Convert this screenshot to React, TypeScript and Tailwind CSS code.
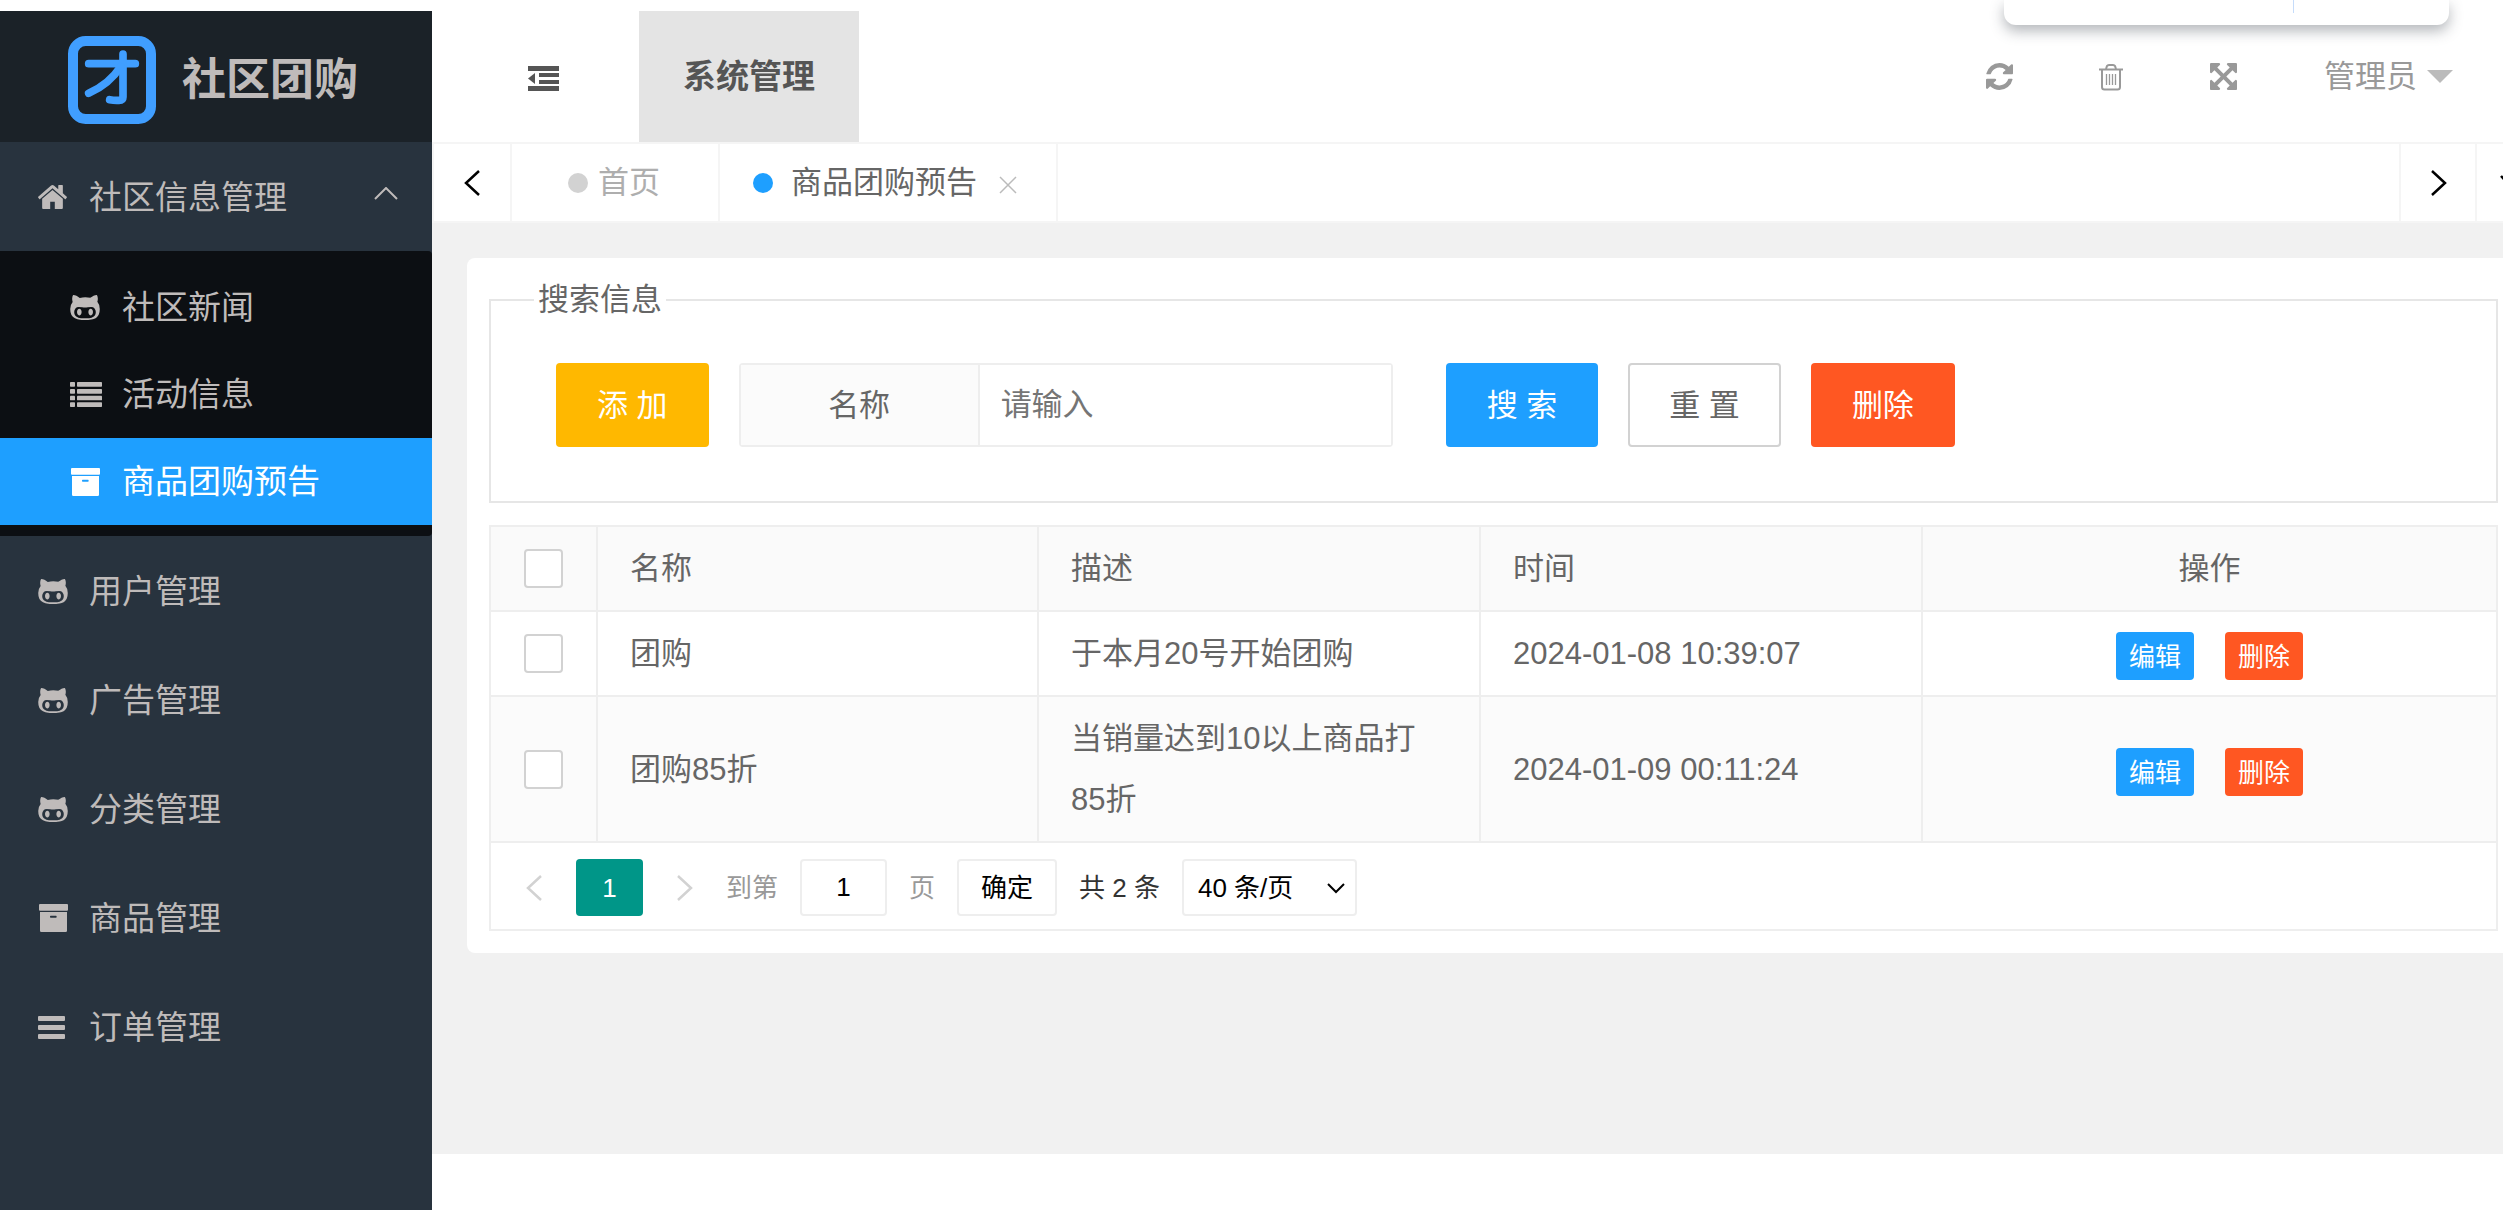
import { useState, type ReactNode } from "react";

/* ---------- Icons ---------- */

function LogoMark() {
  return (
    <svg className="size-[88px] shrink-0" viewBox="0 0 264 264" fill="none" stroke="#409eff" aria-hidden="true">
      <rect x="15" y="15" width="234" height="234" rx="38" strokeWidth="30" />
      <g strokeWidth="23" strokeLinecap="round" strokeLinejoin="round">
        <path d="M62 83H202" />
        <path d="M165 54V183Q165 193 153 193Q140 194 125 191" />
        <path d="M158 92C134 129 107 152 62 172" />
      </g>
    </svg>
  );
}

function HomeIcon() {
  return (
    <svg className="h-6 w-[29px]" viewBox="89 250 1614 1286" preserveAspectRatio="none" fill="currentColor" aria-hidden="true">
      <path d="M1472 992v480q0 26-19 45t-45 19h-384v-384h-256v384h-384q-26 0-45-19t-19-45v-480q0-1 .5-3t.5-3l575-474 575 474q1 2 1 6zm223-69l-62 74q-8 9-21 11h-3q-13 0-21-7l-692-577-692 577q-12 8-24 7-13-2-21-11l-62-74q-8-10-7-23.5t11-21.5l719-599q32-26 76-26t76 26l244 204v-195q0-14 9-23t23-9h192q14 0 23 9t9 23v408l219 182q10 8 11 21.5t-7 23.5z" />
    </svg>
  );
}

function CatIcon() {
  return (
    <svg className="h-[25px] w-[30px]" viewBox="0 256 1664 1408" fill="currentColor" aria-hidden="true">
      <path d="M640 1216q0 40-12.5 82t-43 76-72.5 34-72.5-34-43-76-12.5-82 12.5-82 43-76 72.5-34 72.5 34 43 76 12.5 82zm640 0q0 40-12.5 82t-43 76-72.5 34-72.5-34-43-76-12.5-82 12.5-82 43-76 72.5-34 72.5 34 43 76 12.5 82zm160 0q0-120-69-204t-187-84q-41 0-195 21-71 11-157 11t-157-11q-152-21-195-21-118 0-187 84t-69 204q0 88 32 153.5t81 103 122 60 140 29.5 149 7h168q82 0 149-7t140-29.5 122-60 81-103 32-153.5zm224-176q0 207-61 331-38 77-105.5 133t-141 86-170 47.5-171.5 22-167 4.5q-78 0-142-3t-147.5-12.5-152.5-30-137-51.5-121-81-86-115q-62-123-62-331 0-237 136-396-27-82-27-170 0-116 51-218 108 0 190 39.5t189 123.5q147-35 309-35 148 0 280 32 105-82 187-121t189-39q51 102 51 218 0 87-27 168 136 160 136 398z" />
    </svg>
  );
}

function ListIcon() {
  return (
    <svg className="h-[25px] w-8" viewBox="0 0 96 75" fill="currentColor" aria-hidden="true">
      {[0, 21, 41, 61].map((y) => (
        <g key={y}>
          <rect x="0" y={y} width="15" height="14" rx="2" />
          <rect x="21" y={y} width="75" height="14" rx="2" />
        </g>
      ))}
    </svg>
  );
}

function ArchiveIcon() {
  return (
    <svg className="ml-px h-7 w-[29px]" viewBox="0 0 87 84" fill="currentColor" aria-hidden="true">
      <rect x="0" y="0" width="87" height="20" rx="3" />
      <path
        fillRule="evenodd"
        d="M3 24H84V80Q84 84 80 84H7Q3 84 3 80ZM35 35Q33 35 33 38T35 41H51Q53 41 53 38T51 35Z"
      />
    </svg>
  );
}

function BarsIcon() {
  return (
    <svg className="h-[23px] w-[27px]" viewBox="0 0 27 23" fill="currentColor" aria-hidden="true">
      <rect x="0" y="0" width="27" height="5" rx="1" />
      <rect x="0" y="9" width="27" height="5" rx="1" />
      <rect x="0" y="18" width="27" height="5" rx="1" />
    </svg>
  );
}

function OutdentIcon() {
  return (
    <svg className="h-[25px] w-[31px]" viewBox="0 0 31 25" fill="currentColor" aria-hidden="true">
      <rect x="0" y="0" width="31" height="5" />
      <rect x="11" y="7" width="20" height="4" />
      <rect x="11" y="14" width="20" height="4" />
      <rect x="0" y="20" width="31" height="5" />
      <path d="M7 7V18L0 12.5Z" />
    </svg>
  );
}

function RefreshIcon() {
  return (
    <svg className="h-[27px] w-[27px]" viewBox="128 128 1536 1536" fill="currentColor" aria-hidden="true">
      <path d="M1639 1056q0 5-1 7-64 268-268 434.5t-478 166.5q-146 0-282.5-55t-243.5-157l-129 129q-19 19-45 19t-45-19-19-45v-448q0-26 19-45t45-19h448q26 0 45 19t19 45-19 45l-137 137q71 66 161 102t187 36q134 0 250-65t186-179q11-17 53-117 8-23 30-23h192q13 0 22.5 9.5t9.5 22.5zm25-800v448q0 26-19 45t-45 19h-448q-26 0-45-19t-19-45 19-45l138-138q-148-137-349-137-134 0-250 65t-186 179q-11 17-53 117-8 23-30 23h-199q-13 0-22.5-9.5t-9.5-22.5v-7q65-268 270-434.5t480-166.5q146 0 284 55.5t245 156.5l130-129q19-19 45-19t45 19 19 45z" />
    </svg>
  );
}

function TrashIcon() {
  return (
    <svg className="h-7 w-6" viewBox="0 0 24 28" fill="none" stroke="currentColor" aria-hidden="true">
      <path d="M0 6.500H24" strokeWidth="2" />
      <path d="M7 6L8 3Q8.500 2 10 2H14Q15.500 2 16 3L17 6" strokeWidth="2" />
      <path d="M3 6V24Q3 26.500 5.500 26.500H18.500Q21 26.500 21 24V6" strokeWidth="2" />
      <path d="M7.500 11V22M10.500 11V22M13.500 11V22M16.500 11V22" strokeWidth="1.300" />
    </svg>
  );
}

function ExpandIcon() {
  return (
    <svg className="h-[27px] w-[27px]" viewBox="128 128 1536 1536" fill="currentColor" aria-hidden="true">
      <path d="M1411 541l-355 355 355 355 144-144q29-31 70-14 39 17 39 59v448q0 26-19 45t-45 19h-448q-42 0-59-40-17-39 14-69l144-144-355-355-355 355 144 144q31 30 14 69-17 40-59 40h-448q-26 0-45-19t-19-45v-448q0-42 40-59 39-17 69 14l144 144 355-355-355-355-144 144q-19 19-45 19-12 0-24-5-40-17-40-59v-448q0-26 19-45t45-19h448q42 0 59 40 17 39-14 69l-144 144 355 355 355-355-144-144q-31-30-14-69 17-40 59-40h448q26 0 45 19t19 45v448q0 42-39 59-13 5-25 5-26 0-45-19z" />
    </svg>
  );
}

function ChevronLeft() {
  return (
    <svg className="h-[26px] w-4" viewBox="0 0 16 26" fill="none" stroke="currentColor" strokeWidth="2.5" aria-hidden="true">
      <path d="M15 1L2 13L15 25" />
    </svg>
  );
}

function ChevronRight() {
  return (
    <svg className="h-[26px] w-4" viewBox="0 0 16 26" fill="none" stroke="currentColor" strokeWidth="2.5" aria-hidden="true">
      <path d="M1 1L14 13L1 25" />
    </svg>
  );
}

function ChevronDown() {
  return (
    <svg className="h-4 w-[26px] shrink-0" viewBox="0 0 26 16" fill="none" stroke="currentColor" strokeWidth="2.5" aria-hidden="true">
      <path d="M1 1L13 14L25 1" />
    </svg>
  );
}

/* ---------- Sidebar ---------- */

const communityItems = [
  { label: "社区新闻", icon: <CatIcon />, active: false },
  { label: "活动信息", icon: <ListIcon />, active: false },
  { label: "商品团购预告", icon: <ArchiveIcon />, active: true },
];

const sections = [
  { label: "用户管理", icon: <CatIcon /> },
  { label: "广告管理", icon: <CatIcon /> },
  { label: "分类管理", icon: <CatIcon /> },
  { label: "商品管理", icon: <ArchiveIcon /> },
  { label: "订单管理", icon: <BarsIcon /> },
];

function SectionLink({ label, icon, children }: { label: string; icon: ReactNode; children?: ReactNode }) {
  return (
    <a href="#" className="flex h-[109px] items-center pl-[38px] pr-[34px] pt-px">
      <span className="mr-[19px] flex w-8 shrink-0 items-center">{icon}</span>
      <span className="flex-1">{label}</span>
      {children}
    </a>
  );
}

function Sidebar() {
  return (
    <aside className="w-[432px] shrink-0 bg-[#28333e] text-[33px] leading-none text-[#bfbbba]">
      <div className="flex h-[131px] items-center gap-[26px] bg-[#1b2228] pl-[68px] pt-[7px]">
        <LogoMark />
        <h1 className="text-[44px] font-bold">社区团购</h1>
      </div>
      <nav>
        <SectionLink label="社区信息管理" icon={<HomeIcon />}>
          <svg className="mb-2 h-[13px] w-6" viewBox="0 0 24 13" fill="none" stroke="currentColor" strokeWidth="2" aria-hidden="true">
            <path d="M1 12L12 1L23 12" />
          </svg>
        </SectionLink>
        <ul className="rounded-r bg-[#0c0f13] pb-[11px] pt-[13px]">
          {communityItems.map((item) => (
            <li key={item.label}>
              <a
                href="#"
                className={
                  item.active
                    ? "flex h-[87px] items-center bg-[#1e9fff] pl-[70px] text-white"
                    : "flex h-[87px] items-center pl-[70px]"
                }
              >
                <span className="mr-5 flex w-8 shrink-0 items-center">{item.icon}</span>
                {item.label}
              </a>
            </li>
          ))}
        </ul>
        {sections.map((s) => (
          <SectionLink key={s.label} label={s.label} icon={s.icon} />
        ))}
      </nav>
    </aside>
  );
}

/* ---------- Top bars ---------- */

function TopBar() {
  return (
    <header className="flex h-[131px] items-stretch justify-between bg-white">
      <div className="flex">
        <button type="button" aria-label="收起菜单" className="pl-24 pr-20 pt-[3px] text-[#555]">
          <OutdentIcon />
        </button>
        <button type="button" className="bg-[#e4e4e4] px-11 text-[33px] font-bold leading-none text-[#555]">
          系统管理
        </button>
      </div>
      <div className="flex items-center pr-[50px] text-[#999]">
        <button type="button" aria-label="刷新" className="flex w-28 justify-center">
          <RefreshIcon />
        </button>
        <button type="button" aria-label="清理" className="flex w-28 justify-center">
          <TrashIcon />
        </button>
        <button type="button" aria-label="全屏" className="flex w-28 justify-center">
          <ExpandIcon />
        </button>
        <button type="button" className="ml-[45px] flex items-center gap-[10px] text-[31px] leading-none">
          管理员
          <svg className="h-[13px] w-[26px] text-[#bbb]" viewBox="0 0 26 13" fill="currentColor" aria-hidden="true">
            <path d="M0 0H26L13 13Z" />
          </svg>
        </button>
      </div>
    </header>
  );
}

function TabBar() {
  return (
    <div className="flex h-[81px] items-stretch border-y-2 border-l-2 border-[#f5f5f5] bg-white text-[31px] leading-none">
      <button type="button" aria-label="向左" className="flex w-[78px] items-center justify-center border-r-2 border-[#f5f5f5] text-black">
        <ChevronLeft />
      </button>
      <button type="button" className="flex items-center border-r-2 border-[#f5f5f5] pl-14 pr-[58px] text-[#aeaeae]">
        <span className="mr-[10px] size-5 rounded-full bg-[#d2d2d2]" />
        首页
      </button>
      <div className="flex items-center border-r-2 border-[#f5f5f5] pl-[33px] pr-[39px] text-[#666]">
        <span className="mr-[18px] size-5 rounded-full bg-[#1e9fff]" />
        <button type="button">商品团购预告</button>
        <button type="button" aria-label="关闭标签" className="ml-[22px] mt-1 text-[#bbb]">
          <svg className="size-[18px]" viewBox="0 0 18 18" fill="none" stroke="currentColor" strokeWidth="1.5" aria-hidden="true">
            <path d="M1 1L17 17M17 1L1 17" />
          </svg>
        </button>
      </div>
      <div className="flex-1" />
      <button type="button" aria-label="向右" className="flex w-[76px] items-center justify-center border-l-2 border-[#f5f5f5] pl-[2px] text-black">
        <ChevronRight />
      </button>
      <button type="button" aria-label="更多" className="flex w-7 items-center overflow-hidden border-l-2 border-[#f5f5f5] pl-[23px] text-black">
        <ChevronDown />
      </button>
    </div>
  );
}

/* ---------- Content ---------- */

function SearchForm() {
  return (
    <form onSubmit={(e) => e.preventDefault()}>
      <fieldset className="border-2 border-[#e6e6e6] pb-[54px] pl-[65px] pt-[42px] leading-none">
        <legend className="-ml-[22px] px-1 leading-[42px]">搜索信息</legend>
        <div className="flex items-stretch">
          <button type="button" className="h-[84px] rounded bg-[#ffb800] px-[41px] text-white">
            添 加
          </button>
          <div className="ml-[30px] flex w-[654px] rounded border-2 border-[#eee]">
            <label htmlFor="name" className="flex w-[239px] shrink-0 items-center justify-center border-r-2 border-[#eee] bg-[#fbfbfb]">
              名称
            </label>
            <input
              id="name"
              type="text"
              placeholder="请输入"
              className="min-w-0 flex-1 bg-white px-[21px] outline-none placeholder:text-[#757575]"
            />
          </div>
          <button type="submit" className="ml-[53px] rounded bg-[#1e9fff] px-[41px] text-white">
            搜 索
          </button>
          <button type="reset" className="ml-[30px] rounded border-2 border-[#d2d2d2] bg-white px-[39px]">
            重 置
          </button>
          <button type="button" className="ml-[30px] rounded bg-[#ff5722] px-[41px] text-white">
            删除
          </button>
        </div>
      </fieldset>
    </form>
  );
}

const rows = [
  { name: "团购", desc: "于本月20号开始团购", time: "2024-01-08 10:39:07" },
  { name: "团购85折", desc: "当销量达到10以上商品打85折", time: "2024-01-09 00:11:24" },
];

function Check({ label }: { label: string }) {
  return (
    <input
      type="checkbox"
      aria-label={label}
      className="mx-auto block size-[39px] appearance-none rounded border-2 border-[#d2d2d2] bg-white checked:border-[#5fb878] checked:bg-[#5fb878]"
    />
  );
}

function DataTable() {
  return (
    <table className="w-full table-fixed border-separate border-spacing-0 text-left leading-[61px]">
      <colgroup>
        <col className="w-[107px]" />
        <col className="w-[441px]" />
        <col className="w-[442px]" />
        <col className="w-[442px]" />
        <col />
      </colgroup>
      <thead className="bg-[#fafafa]">
        <tr>
          <th className="border-b-2 border-r-2 border-[#eee] py-[11px]">
            <Check label="全选" />
          </th>
          <th className="border-b-2 border-r-2 border-[#eee] px-8 py-[11px] font-normal">名称</th>
          <th className="border-b-2 border-r-2 border-[#eee] px-8 py-[11px] font-normal">描述</th>
          <th className="border-b-2 border-r-2 border-[#eee] px-8 py-[11px] font-normal">时间</th>
          <th className="border-b-2 border-[#eee] px-8 py-[11px] text-center font-normal">操作</th>
        </tr>
      </thead>
      <tbody>
        {rows.map((row) => (
          <tr key={row.name} className="even:bg-[#fbfbfb]">
            <td className="border-b-2 border-r-2 border-[#eee] py-[11px]">
              <Check label={row.name} />
            </td>
            <td className="border-b-2 border-r-2 border-[#eee] px-8 py-[11px]">{row.name}</td>
            <td className="border-b-2 border-r-2 border-[#eee] px-8 py-[11px]">{row.desc}</td>
            <td className="border-b-2 border-r-2 border-[#eee] px-8 py-[11px]">{row.time}</td>
            <td className="border-b-2 border-[#eee] pt-[5px]">
              <div className="flex justify-center gap-[31px] text-[26px] leading-none text-white">
                <button type="button" className="h-12 rounded bg-[#1e9fff] px-[13px] pt-[2px]">
                  编辑
                </button>
                <button type="button" className="h-12 rounded bg-[#ff5722] px-[13px] pt-[2px]">
                  删除
                </button>
              </div>
            </td>
          </tr>
        ))}
      </tbody>
    </table>
  );
}

function Pagination() {
  const [page, setPage] = useState("1");
  return (
    <div className="flex items-center pb-[13px] pl-[35px] pt-4 text-[26px] leading-none text-[#333]">
      <button type="button" aria-label="上一页" className="text-[#d2d2d2]">
        <ChevronLeft />
      </button>
      <button type="button" className="ml-[34px] h-[57px] w-[67px] rounded bg-[#009688] text-white">
        1
      </button>
      <button type="button" aria-label="下一页" className="ml-[34px] text-[#d2d2d2]">
        <ChevronRight />
      </button>
      <label htmlFor="page" className="ml-[33px] text-[#999]">
        到第
      </label>
      <input
        id="page"
        type="text"
        value={page}
        onChange={(e) => setPage(e.target.value)}
        className="mx-[22px] h-[57px] w-[87px] rounded border-2 border-[#eee] bg-white text-center text-black outline-none"
      />
      <span className="text-[#999]">页</span>
      <button type="button" className="ml-[22px] h-[57px] w-[100px] rounded border-2 border-[#eee] bg-white text-black">
        确定
      </button>
      <span className="ml-[22px]">共 2 条</span>
      <div className="relative ml-[22px]">
        <select
          aria-label="每页条数"
          defaultValue="40"
          className="h-[57px] w-[175px] appearance-none rounded border-2 border-[#eee] bg-white pl-[14px] text-black outline-none"
        >
          <option value="10">10 条/页</option>
          <option value="20">20 条/页</option>
          <option value="40">40 条/页</option>
        </select>
        <svg
          className="pointer-events-none absolute right-3 top-6 h-[11px] w-[18px]"
          viewBox="0 0 18 11"
          fill="none"
          stroke="#000"
          strokeWidth="2"
          aria-hidden="true"
        >
          <path d="M1 1L9 9L17 1" />
        </svg>
      </div>
    </div>
  );
}

export default function App() {
  return (
    <div className="relative flex min-h-screen overflow-hidden bg-white pt-[11px] font-['Liberation_Sans','Noto_Sans_CJK_SC',sans-serif]">
      <Sidebar />
      <div className="flex min-w-0 flex-1 flex-col pb-14">
        <TopBar />
        <TabBar />
        <main className="flex-1 bg-[#f1f1f1] pl-[35px] pt-[35px]">
          <section className="rounded-l-lg bg-white pb-[22px] pl-[22px] pr-[5px] pt-[21px] text-[31px] text-[#666]">
            <SearchForm />
            <div className="mt-[22px] border-2 border-[#eee]">
              <DataTable />
              <Pagination />
            </div>
          </section>
        </main>
      </div>
      <div className="absolute right-[54px] top-0 flex h-[25px] w-[445px] justify-end rounded-b-xl bg-white pr-[155px] shadow-[0_6px_14px_rgba(40,50,60,0.35)]">
        <span className="h-[13px] w-px bg-[#c6dcfa]" />
      </div>
    </div>
  );
}
